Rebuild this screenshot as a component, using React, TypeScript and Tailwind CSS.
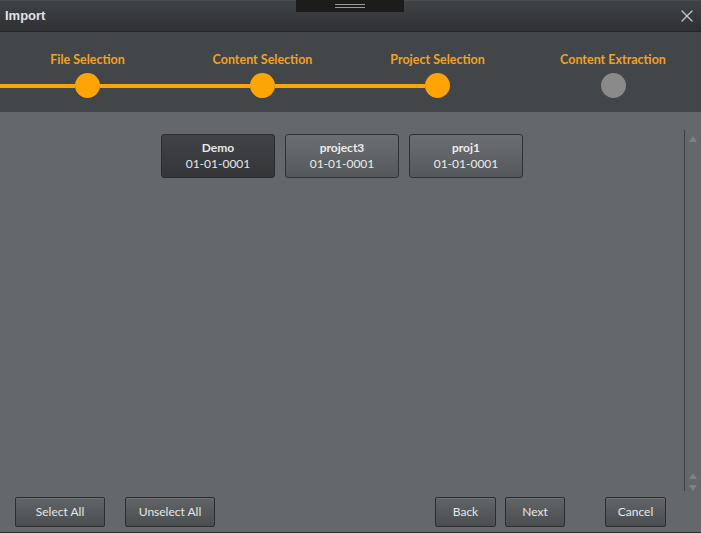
import { X } from 'lucide-react';

const steps = [
  { label: 'File Selection', done: true, left: true, right: true },
  { label: 'Content Selection', done: true, left: true, right: true },
  { label: 'Project Selection', done: true, left: true, right: false },
  { label: 'Content Extraction', done: false, left: false, right: false },
];

const projects = [
  { name: 'Demo', date: '01-01-0001', selected: true },
  { name: 'project3', date: '01-01-0001', selected: false },
  { name: 'proj1', date: '01-01-0001', selected: false },
];

function FooterButton({ label, width }: { label: string; width: string }) {
  return (
    <button
      className={`${width} h-[30px] rounded-[2px] border border-[#2b2d2f] bg-gradient-to-b from-[#616568] to-[#4b4e51] text-[12px] text-[#e6e6e6] shadow-[inset_0_1px_0_rgba(255,255,255,0.08)]`}
    >
      {label}
    </button>
  );
}

export default function App() {
  return (
    <div
      className="w-[701px] h-[533px] flex flex-col bg-[#64686b] border-b border-[#2a2c2e] overflow-hidden"
      style={{ fontFamily: 'Lato, "Open Sans", sans-serif' }}
    >
      {/* Title bar */}
      <div className="relative h-8 shrink-0 flex items-center justify-between pl-[5px] bg-gradient-to-b from-[#404346] to-[#2e3033] border-t border-[#4a4d50] border-b border-b-[#242628]">
        <span
          className="text-[13px] font-bold text-[#e2e2e2]"
          style={{ fontFamily: '"Liberation Sans", Arial, sans-serif' }}
        >
          Import
        </span>
        <X className="w-[20px] h-[20px] text-[#c8c8c8] mr-[4px]" strokeWidth={1.5} />
        {/* drag handle tab */}
        <div className="absolute left-[296px] top-[-1px] w-[108px] h-[12px] bg-[#1c1c1c] flex flex-col items-center justify-center gap-[2px]">
          <div className="w-[30px] h-px bg-[#9a9a9a]" />
          <div className="w-[30px] h-px bg-[#9a9a9a]" />
        </div>
      </div>

      {/* Stepper */}
      <div className="h-[80px] shrink-0 bg-[#434649] grid grid-cols-[175px_175px_175px_176px] pt-[19px]">
        {steps.map((s) => (
          <div key={s.label} className="flex flex-col items-center">
            <div className="h-[18px] text-[12.5px] font-bold text-[#f2a21f] leading-[18px]">{s.label}</div>
            <div className="w-full h-[25px] mt-[4px] flex items-center">
              <div className={`flex-1 h-[4px] ${s.left ? 'bg-[#ffa405]' : ''}`} />
              <div className={`w-[25px] h-[25px] rounded-full ${s.done ? 'bg-[#ffa405]' : 'bg-[#8a8a8a]'}`} />
              <div className={`flex-1 h-[4px] ${s.right ? 'bg-[#ffa405]' : ''}`} />
            </div>
          </div>
        ))}
      </div>

      {/* Content */}
      <div className="flex-1 flex min-h-0">
        <div className="flex-1 flex flex-col">
          <div className="flex justify-center gap-[10px] pt-[22px]">
            {projects.map((p) => (
              <div
                key={p.name}
                className={`w-[114px] h-[44px] rounded-[3px] border flex flex-col items-center justify-center text-[12px] leading-[16px] ${
                  p.selected
                    ? 'border-[#2a2c2e] bg-gradient-to-b from-[#404245] to-[#34363a] text-[#e8e8e8]'
                    : 'border-[#2f3133] bg-gradient-to-b from-[#6c6f72] to-[#55585b] text-[#ececec]'
                }`}
              >
                <span className="font-bold">{p.name}</span>
                <span>{p.date}</span>
              </div>
            ))}
          </div>
          <div className="flex-1" />
          <div className="flex items-center pl-[15px] pb-[5px]">
            <FooterButton label="Select All" width="w-[90px]" />
            <div className="w-[20px]" />
            <FooterButton label="Unselect All" width="w-[90px]" />
            <div className="w-[220px]" />
            <FooterButton label="Back" width="w-[61px]" />
            <div className="w-[9px]" />
            <FooterButton label="Next" width="w-[60px]" />
            <div className="w-[40px]" />
            <FooterButton label="Cancel" width="w-[61px]" />
          </div>
        </div>

        {/* Scrollbar */}
        <div className="w-[17px] flex pt-[18px] pb-[41px]">
          <div className="w-px bg-[#3e4144]" />
          <div className="flex-1 flex flex-col items-center justify-between pt-[6px]">
            <svg width="8" height="6" viewBox="0 0 8 6">
              <path d="M4 0 L8 6 L0 6 Z" fill="#7d8184" />
            </svg>
            <div className="flex flex-col items-center gap-[6px]">
              <svg width="8" height="6" viewBox="0 0 8 6">
                <path d="M4 0 L8 6 L0 6 Z" fill="#7d8184" />
              </svg>
              <svg width="8" height="6" viewBox="0 0 8 6">
                <path d="M0 0 L8 0 L4 6 Z" fill="#7d8184" />
              </svg>
            </div>
          </div>
        </div>
      </div>
    </div>
  );
}
